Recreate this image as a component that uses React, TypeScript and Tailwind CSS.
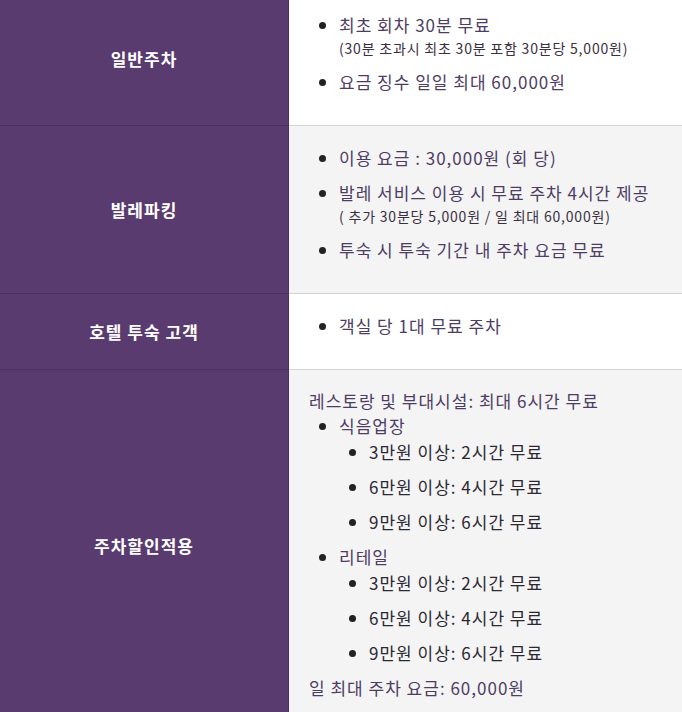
import React from 'react';

const font = { fontFamily: '"Noto Sans CJK KR", "Noto Sans", sans-serif' };

const Row: React.FC<{ label: string; bg: string; children: React.ReactNode }> = ({ label, bg, children }) => (
  <div className="flex border-b border-[#d4d4d4]">
    <div className="w-[289px] shrink-0 bg-[#5a3b70] border-r border-[#4c2e63] border-b border-b-[#4c2e63] -mb-px flex items-center justify-center text-white font-bold text-[17px] tracking-[1px]">
      {label}
    </div>
    <div className={`flex-1 ${bg} pl-5 pr-4 pt-[19px] pb-[21px] text-[#4d3c63] text-[17px] tracking-[1px] leading-[25px]`}>
      {children}
    </div>
  </div>
);

const Li: React.FC<{ children: React.ReactNode; mb?: string }> = ({ children, mb }) => (
  <li className={`list-disc marker:text-[#222] ${mb ?? 'mb-[10px]'}`}>{children}</li>
);

const Small: React.FC<{ children: React.ReactNode }> = ({ children }) => (
  <div className="text-[14px] tracking-[0.8px] leading-[22px] text-[#3a3040]">{children}</div>
);

const Sub: React.FC<{ items: string[] }> = ({ items }) => (
  <ul className="pl-[30px] mt-[1px] text-[#2b2833]">
    {items.map((t) => (
      <Li key={t}>{t}</Li>
    ))}
  </ul>
);

export default function App() {
  const sub = ['3만원 이상: 2시간 무료', '6만원 이상: 4시간 무료', '9만원 이상: 6시간 무료'];
  return (
    <div className="h-[712px] overflow-hidden bg-white" style={font}>
      <div className="-mt-[7px]">
        <Row label="일반주차" bg="bg-white">
          <ul className="pl-[30px]">
            <Li>
              최초 회차 30분 무료
              <Small>(30분 초과시 최초 30분 포함 30분당 5,000원)</Small>
            </Li>
            <Li>요금 징수 일일 최대 60,000원</Li>
          </ul>
        </Row>
        <Row label="발레파킹" bg="bg-[#f4f4f4]">
          <ul className="pl-[30px]">
            <Li>이용 요금 : 30,000원 (회 당)</Li>
            <Li>
              발레 서비스 이용 시 무료 주차 4시간 제공
              <Small>( 추가 30분당 5,000원 / 일 최대 60,000원)</Small>
            </Li>
            <Li>투숙 시 투숙 기간 내 주차 요금 무료</Li>
          </ul>
        </Row>
        <Row label="호텔 투숙 고객" bg="bg-white">
          <ul className="pl-[30px]">
            <Li>객실 당 1대 무료 주차</Li>
          </ul>
        </Row>
        <Row label="주차할인적용" bg="bg-[#f4f4f4]">
          <p className="leading-[24px]">레스토랑 및 부대시설: 최대 6시간 무료</p>
          <ul className="pl-[30px]">
            <Li mb="mb-0">
              식음업장
              <Sub items={sub} />
            </Li>
            <Li mb="mb-0">
              리테일
              <Sub items={sub} />
            </Li>
          </ul>
          <p className="leading-[25px] mt-[2px]">일 최대 주차 요금: 60,000원</p>
        </Row>
      </div>
    </div>
  );
}
